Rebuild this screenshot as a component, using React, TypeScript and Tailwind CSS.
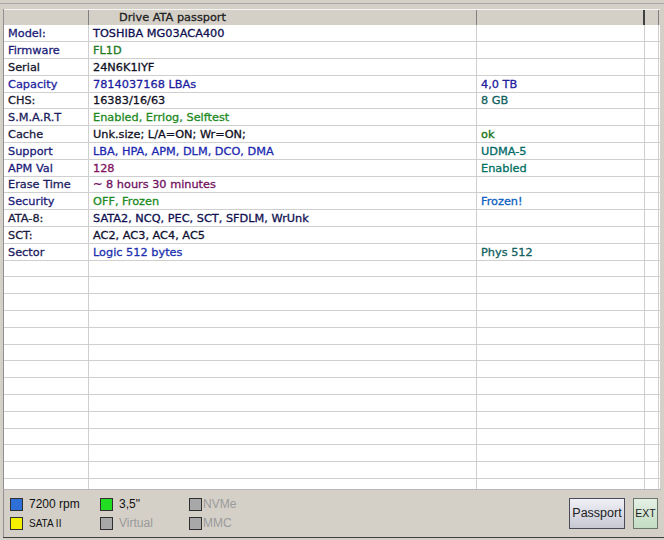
import React from "react";

type Row = {
	label: string;
	labelColor: string;
	value: string;
	valueColor: string;
	extra?: string;
	extraColor?: string;
};

const rows: Row[] = [
	{ label: "Model:", labelColor: "text-[#1c1c78]", value: "TOSHIBA MG03ACA400", valueColor: "text-[#101050]" },
	{ label: "Firmware", labelColor: "text-[#1c1c78]", value: "FL1D", valueColor: "text-[#1e7a1e]" },
	{ label: "Serial", labelColor: "text-[#14142e]", value: "24N6K1IYF", valueColor: "text-[#101024]" },
	{ label: "Capacity", labelColor: "text-[#2424a0]", value: "7814037168 LBAs", valueColor: "text-[#1c1ca0]", extra: "4,0 TB", extraColor: "text-[#2020a0]" },
	{ label: "CHS:", labelColor: "text-[#1a1a30]", value: "16383/16/63", valueColor: "text-[#101024]", extra: "8 GB", extraColor: "text-[#106060]" },
	{ label: "S.M.A.R.T", labelColor: "text-[#1c1c60]", value: "Enabled, Errlog, Selftest", valueColor: "text-[#1e8a1e]" },
	{ label: "Cache", labelColor: "text-[#1a1a40]", value: "Unk.size; L/A=ON; Wr=ON;", valueColor: "text-[#101024]", extra: "ok", extraColor: "text-[#107010]" },
	{ label: "Support", labelColor: "text-[#1c1c78]", value: "LBA, HPA, APM, DLM, DCO, DMA", valueColor: "text-[#1c28b0]", extra: "UDMA-5", extraColor: "text-[#006868]" },
	{ label: "APM Val", labelColor: "text-[#1c1c78]", value: "128", valueColor: "text-[#801060]", extra: "Enabled", extraColor: "text-[#007060]" },
	{ label: "Erase Time", labelColor: "text-[#1c1c60]", value: "~ 8 hours 30 minutes", valueColor: "text-[#701060]" },
	{ label: "Security", labelColor: "text-[#1c1c78]", value: "OFF, Frozen", valueColor: "text-[#1e8a1e]", extra: "Frozen!", extraColor: "text-[#1060c0]" },
	{ label: "ATA-8:", labelColor: "text-[#1a1a40]", value: "SATA2, NCQ, PEC, SCT, SFDLM, WrUnk", valueColor: "text-[#101050]" },
	{ label: "SCT:", labelColor: "text-[#1a1a40]", value: "AC2, AC3, AC4, AC5", valueColor: "text-[#101030]" },
	{ label: "Sector", labelColor: "text-[#1c1c60]", value: "Logic 512 bytes", valueColor: "text-[#2030b0]", extra: "Phys 512", extraColor: "text-[#106060]" },
];

const emptyRows = Array.from({ length: 16 });

function LegendItem({ color, text, textClass }: { color: string; text: string; textClass: string }) {
	return (
		<div className="flex items-center gap-[6px] h-[19px]">
			<span className={`w-[13px] h-[13px] border border-[#303030] ${color}`} />
			<span className={textClass}>{text}</span>
		</div>
	);
}

export default function App() {
	return (
		<div
			className="w-[664px] h-[540px] bg-[#d4d0c8] flex flex-col overflow-hidden"
			style={{ fontFamily: '"DejaVu Sans", Verdana, sans-serif' }}
		>
			{/* top strip */}
			<div className="h-[3px]" />
			<div className="h-[1px] bg-[#a8a8a8]" />
			<div className="h-[5px]" />

			{/* table */}
			<div className="ml-[3px] w-[657px] flex-1 flex flex-col border-l border-[#909090] bg-white overflow-hidden [-webkit-text-stroke:0.3px]">
				{/* header */}
				<div className="flex h-[16px] bg-[#d4d0c8] border-t border-[#f4f4f4] text-[11.3px] text-[#202020]">
					<div className="w-[85px] border-r border-[#808080]" />
					<div className="w-[388px] border-r border-[#808080] pl-[30px] leading-[15px]">Drive ATA passport</div>
					<div className="w-[168px] border-r-2 border-[#404040]" />
					<div className="w-[14px] border-r border-[#808080]" />
				</div>
				<div className="h-[2px] bg-[#404040]" />

				{/* rows */}
				{rows.map((r, i) => (
					<div
						key={r.label}
						className={`flex border-b border-[#cfcfcf] text-[11.3px] ${i % 5 === 4 ? "h-[16px]" : "h-[17px]"}`}
					>
						<div className={`w-[85px] border-r border-[#cfcfcf] pl-[4px] pt-[2px] flex items-center ${r.labelColor}`}>{r.label}</div>
						<div className={`w-[388px] border-r border-[#cfcfcf] pl-[4px] pt-[2px] flex items-center whitespace-nowrap ${r.valueColor}`}>{r.value}</div>
						<div className={`w-[168px] border-r border-[#cfcfcf] pl-[4px] pt-[2px] flex items-center ${r.extraColor ?? ""}`}>{r.extra ?? ""}</div>
						<div className="w-[14px] border-r border-[#cfcfcf]" />
					</div>
				))}
				{emptyRows.map((_, i) => (
					<div
						key={i}
						className={`flex border-b border-[#cfcfcf] shrink-0 ${i % 5 === 0 ? "h-[16px]" : "h-[17px]"}`}
					>
						<div className="w-[85px] border-r border-[#cfcfcf]" />
						<div className="w-[388px] border-r border-[#cfcfcf]" />
						<div className="w-[168px] border-r border-[#cfcfcf]" />
						<div className="w-[14px] border-r border-[#cfcfcf]" />
					</div>
				))}
			</div>

			{/* bottom panel */}
			<div
				className="ml-[3px] w-[658px] h-[48px] shrink-0 border-l border-t border-[#909090] border-t-[#b8b8b8] flex items-center pl-[6px] pr-[3px] text-[12px]"
				style={{ fontFamily: '"Liberation Sans", Arial, sans-serif' }}
			>
				<div className="flex flex-col w-[90px]">
					<LegendItem color="bg-[#2f6fd8]" text="7200 rpm" textClass="text-[#101010]" />
					<LegendItem color="bg-[#f4f000]" text="SATA II" textClass="text-[#101010] text-[10px]" />
				</div>
				<div className="flex flex-col w-[89px]">
					<LegendItem color="bg-[#22dd22]" text={'3,5"'} textClass="text-[#101010]" />
					<LegendItem color="bg-[#a8a8a8]" text="Virtual" textClass="text-[#9a9a9a]" />
				</div>
				<div className="flex flex-col">
					<div className="flex items-center gap-[1px] h-[19px]">
						<span className="w-[13px] h-[13px] border border-[#303030] bg-[#a8a8a8]" />
						<span className="text-[#9a9a9a]">NVMe</span>
					</div>
					<div className="flex items-center gap-[1px] h-[19px]">
						<span className="w-[13px] h-[13px] border border-[#303030] bg-[#a8a8a8]" />
						<span className="text-[#9a9a9a]">MMC</span>
					</div>
				</div>
				<div className="flex-1" />
				<div className="flex items-center gap-[8px]">
					<button className="w-[56px] h-[31px] border border-[#4a4a58] bg-gradient-to-b from-[#f0f0f6] to-[#c8c8d4] text-[12.5px] text-[#202020] flex items-center justify-center">
						Passport
					</button>
					<button className="w-[25px] h-[31px] border border-[#6a786a] bg-gradient-to-b from-[#e4f0e4] to-[#c4dcc4] text-[10.5px] text-[#202020] flex items-center justify-center">
						EXT
					</button>
				</div>
			</div>
			<div className="h-[1px] bg-[#404040] ml-[3px]" />
			<div className="h-[2px]" />
		</div>
	);
}
